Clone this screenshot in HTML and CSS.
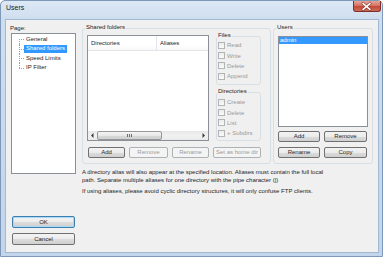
FILE: index.html
```html
<!DOCTYPE html>
<html>
<head>
<meta charset="utf-8">
<title>Users</title>
<link rel="stylesheet" href="styles.css">
</head>
<body>
<div class="window">
  <div class="titlebar">
    <span class="title">Users</span>
    <div class="close">
      <svg width="28" height="11" viewBox="0 0 28 11">
        <path d="M10.5 2.5 L17.5 8.5 M17.5 2.5 L10.5 8.5" stroke="#5a1d16" stroke-width="3" stroke-linecap="square" opacity="0.55"/>
        <path d="M10.5 2.5 L17.5 8.5 M17.5 2.5 L10.5 8.5" stroke="#ffffff" stroke-width="1.6" stroke-linecap="square"/>
      </svg>
    </div>
  </div>
  <div class="client">
    <div class="leftcol">
      <div class="page-label">Page:</div>
      <div class="tree">
        <div class="tree-item first"><span class="branch"></span><span class="txt">General</span></div>
        <div class="tree-item"><span class="branch"></span><span class="txt selected">Shared folders</span></div>
        <div class="tree-item"><span class="branch"></span><span class="txt">Speed Limits</span></div>
        <div class="tree-item last"><span class="branch"></span><span class="txt">IP Filter</span></div>
      </div>
      <div class="btn default ok">OK</div>
      <div class="btn cancel">Cancel</div>
    </div>
    <div class="main">
      <div class="groups">
        <div class="group shared">
          <div class="legend">Shared folders</div>
          <div class="shared-body">
            <div class="listview">
              <div class="lv-header">
                <div class="col col1">Directories</div>
                <div class="col col2">Aliases</div>
              </div>
              <div class="lv-body"></div>
              <div class="hscroll">
                <div class="sb-arrow"><svg width="9" height="9" viewBox="0 0 9 9"><path d="M3 4.5 L5.5 2 L5.5 7 Z" fill="#3a3a3a"/></svg></div>
                <div class="sb-thumb"><span class="grip"></span></div>
                <div class="sb-track"></div>
                <div class="sb-arrow"><svg width="9" height="9" viewBox="0 0 9 9"><path d="M6 4.5 L3.5 2 L3.5 7 Z" fill="#3a3a3a"/></svg></div>
              </div>
            </div>
            <div class="perms">
              <div class="subgroup files">
                <div class="sublegend">Files</div>
                <div class="cb-row"><span class="cb"></span><span>Read</span></div>
                <div class="cb-row"><span class="cb"></span><span>Write</span></div>
                <div class="cb-row"><span class="cb"></span><span>Delete</span></div>
                <div class="cb-row"><span class="cb"></span><span>Append</span></div>
              </div>
              <div class="subgroup dirs">
                <div class="sublegend">Directories</div>
                <div class="cb-row"><span class="cb"></span><span>Create</span></div>
                <div class="cb-row"><span class="cb"></span><span>Delete</span></div>
                <div class="cb-row"><span class="cb"></span><span>List</span></div>
                <div class="cb-row"><span class="cb"></span><span>+ Subdirs</span></div>
              </div>
            </div>
          </div>
          <div class="btnrow">
            <div class="btn w37">Add</div>
            <div class="btn disabled w39">Remove</div>
            <div class="btn disabled w37">Rename</div>
            <div class="btn disabled w48">Set as home dir</div>
          </div>
        </div>
        <div class="group users">
          <div class="legend">Users</div>
          <div class="userlist">
            <div class="user-row selected">admin</div>
          </div>
          <div class="btnrow2 first">
            <div class="btn w42">Add</div>
            <div class="btn w43">Remove</div>
          </div>
          <div class="btnrow2">
            <div class="btn w42">Rename</div>
            <div class="btn w43">Copy</div>
          </div>
        </div>
      </div>
      <div class="desc">
        <p><span class="line">A directory alias will also appear at the specified location. Aliases must contain the full local</span><br><span class="line">path. Separate multiple aliases for one directory with the pipe character (|)</span></p>
        <p><span class="line">If using aliases, please avoid cyclic directory structures, it will only confuse FTP clients.</span></p>
      </div>
    </div>
  </div>
</div>
</body>
</html>
```
FILE: styles.css
```css
* { box-sizing: border-box; margin: 0; padding: 0; }
html, body { width: 383px; height: 257px; overflow: hidden; }
body {
  font-family: "Liberation Sans", Arial, sans-serif;
  font-size: 6px;
  color: #1e1e1e;
  background: #ffffff;
}
.window {
  width: 383px;
  height: 257px;
  border: 1px solid #7d98b8;
  border-radius: 5px 5px 0 0;
  background: linear-gradient(180deg, #dde8f5 0, #cfdeef 18px, #c2d5eb 100%);
  padding: 0 3px 3px 4px;
  display: flex;
  flex-direction: column;
}
.titlebar {
  height: 18px;
  display: flex;
  align-items: flex-start;
}
.title {
  font-size: 7px;
  line-height: 8px;
  margin-top: 3px;
  margin-left: 1px;
  color: #1a1a1a;
}
.close {
  margin-left: auto;
  margin-right: -2px;
  width: 28px;
  height: 11px;
  border: 1px solid #7e3128;
  border-top: none;
  border-radius: 0 0 3px 3px;
  background: linear-gradient(180deg, #e7a598 0, #d67565 45%, #c54a39 55%, #cf6a55 100%);
  display: flex;
  align-items: center;
  justify-content: center;
}
.close svg { display: block; margin-left: -1px; }

.client {
  height: 234px;
  border: 1px solid #a3b9d3;
  background: #f0f0f0;
  display: flex;
  padding: 4px 5px 7px 4px;
}

/* left column */
.leftcol {
  width: 66px;
  display: flex;
  flex-direction: column;
}
.page-label { line-height: 8px; height: 8px; }
.tree {
  margin-top: 1px;
  margin-left: 1px;
  width: 65px;
  height: 141px;
  background: #ffffff;
  border: 1px solid #8a8f98;
  padding-top: 0.5px;
}
.tree-item {
  height: 9.5px;
  display: flex;
  align-items: center;
}
.branch {
  align-self: stretch;
  width: 5px;
  margin-left: 7px;
  position: relative;
}
.branch::before {
  content: "";
  position: absolute;
  left: 0; top: 4.5px;
  width: 5px;
  border-top: 1px dotted #a0a0a0;
}
.branch::after {
  content: "";
  position: absolute;
  left: 0; top: 0; bottom: 0;
  border-left: 1px dotted #a0a0a0;
}
.tree-item.first .branch::after { top: 4.5px; }
.tree-item.last .branch::after { bottom: 4.5px; }
.txt {
  line-height: 7.5px;
  padding: 0 2px;
}
.txt.selected { background: #3399ff; color: #ffffff; }

.btn {
  height: 11px;
  border: 1px solid #707070;
  border-radius: 2px;
  background: linear-gradient(180deg, #f3f3f3 0, #ebebeb 50%, #dddddd 50%, #cfcfcf 100%);
  display: flex;
  align-items: center;
  justify-content: center;
  line-height: 7px;
  color: #1e1e1e;
  white-space: nowrap;
}
.btn.disabled {
  border-color: #adb2b5;
  background: #f4f4f4;
  color: #9b9b9b;
}
.btn.ok, .btn.cancel { height: 12px; width: 63px; margin-left: 2px; }
.btn.ok { margin-top: auto; }
.btn.cancel { margin-top: 5px; }
.btn.default {
  border-color: #3c7fb1;
  box-shadow: inset 0 0 0 1px #a9d8f5;
}

/* main */
.main {
  margin-left: 6px;
  width: 291px;
  display: flex;
  flex-direction: column;
}
.groups {
  margin-top: 4px;
  display: flex;
  gap: 2px;
}
.group {
  border: 1px solid #d5dfe5;
  border-radius: 3px;
  display: flex;
  flex-direction: column;
  padding-bottom: 5px;
}
.legend {
  align-self: flex-start;
  margin: -6px 0 0 2px;
  padding: 0 1px;
  height: 9px;
  line-height: 9px;
  background: #f0f0f0;
}
.shared { width: 189px; }
.users { width: 100px; }

.shared-body {
  margin-top: 3px;
  padding-left: 4px;
  display: flex;
  gap: 7px;
}
.listview {
  width: 122px;
  height: 106px;
  border: 1px solid #8a8f98;
  background: #ffffff;
  display: flex;
  flex-direction: column;
}
.lv-header {
  height: 15px;
  display: flex;
  border-bottom: 1px solid #e5e5e5;
  background: linear-gradient(180deg, #ffffff 0, #ffffff 60%, #f7f8fa 100%);
}
.col {
  line-height: 14px;
  padding-left: 3px;
}
.col1 { width: 69px; border-right: 1px solid #e3e6ea; }
.col2 { flex: 1; }
.lv-body { flex: 1; }
.hscroll {
  height: 9px;
  display: flex;
  background: linear-gradient(180deg, #e6e6e6, #f0f0f0 40%, #f0f0f0 70%, #e8e8e8);
}
.sb-arrow { width: 9px; height: 9px; }
.sb-arrow svg { display: block; }
.sb-thumb {
  width: 65px;
  height: 9px;
  border: 1px solid #979797;
  border-radius: 2px;
  background: linear-gradient(180deg, #f4f4f4 0, #e8e8e8 50%, #d9d9d9 51%, #d0d0d0 100%);
  display: flex;
  align-items: center;
  justify-content: center;
}
.grip {
  width: 5px;
  height: 3px;
  background: repeating-linear-gradient(90deg, #6d6d6d 0 1px, transparent 1px 2px);
}
.sb-track { flex: 1; }

.perms {
  width: 45px;
  display: flex;
  flex-direction: column;
}
.subgroup {
  height: 49px;
  border: 1px solid #d5dfe5;
  border-radius: 3px;
  display: flex;
  flex-direction: column;
}
.files { margin-top: 1px; }
.dirs { margin-top: 7px; }
.sublegend {
  align-self: flex-start;
  margin-top: -6px;
  padding: 0 1px;
  height: 9px;
  line-height: 9px;
  background: #f0f0f0;
}
.dirs .sublegend { height: 10px; line-height: 9px; }
.cb-row {
  height: 10.4px;
  display: flex;
  align-items: center;
  padding-left: 1px;
  color: #9a9a9a;
  white-space: nowrap;
}
.cb {
  width: 7px;
  height: 7px;
  border: 1px solid #b4b4b4;
  background: linear-gradient(180deg, #ececec, #fafafa);
  margin-right: 2px;
  flex: none;
}
.btnrow {
  margin-top: 6px;
  padding-left: 5px;
  display: flex;
  gap: 4px;
}
.w37 { width: 37px; }
.w39 { width: 39px; }
.w48 { width: 48px; }
.w42 { width: 42px; }
.w43 { width: 43px; }

.userlist {
  margin-top: 4px;
  margin-left: 4px;
  width: 90px;
  height: 91px;
  border: 1px solid #8a8f98;
  background: #ffffff;
  padding: 0;
}
.user-row {
  height: 7px;
  line-height: 7px;
  padding-left: 1px;
}
.user-row.selected { background: #3399ff; color: #ffffff; }
.btnrow2 {
  margin-top: 5px;
  padding-left: 4px;
  display: flex;
  gap: 4px;
}
.btnrow2.first { margin-top: 4px; }

.desc {
  margin-top: 5px;
  line-height: 7.5px;
}
.desc p + p { margin-top: 3.5px; }
.line { white-space: nowrap; }
```
